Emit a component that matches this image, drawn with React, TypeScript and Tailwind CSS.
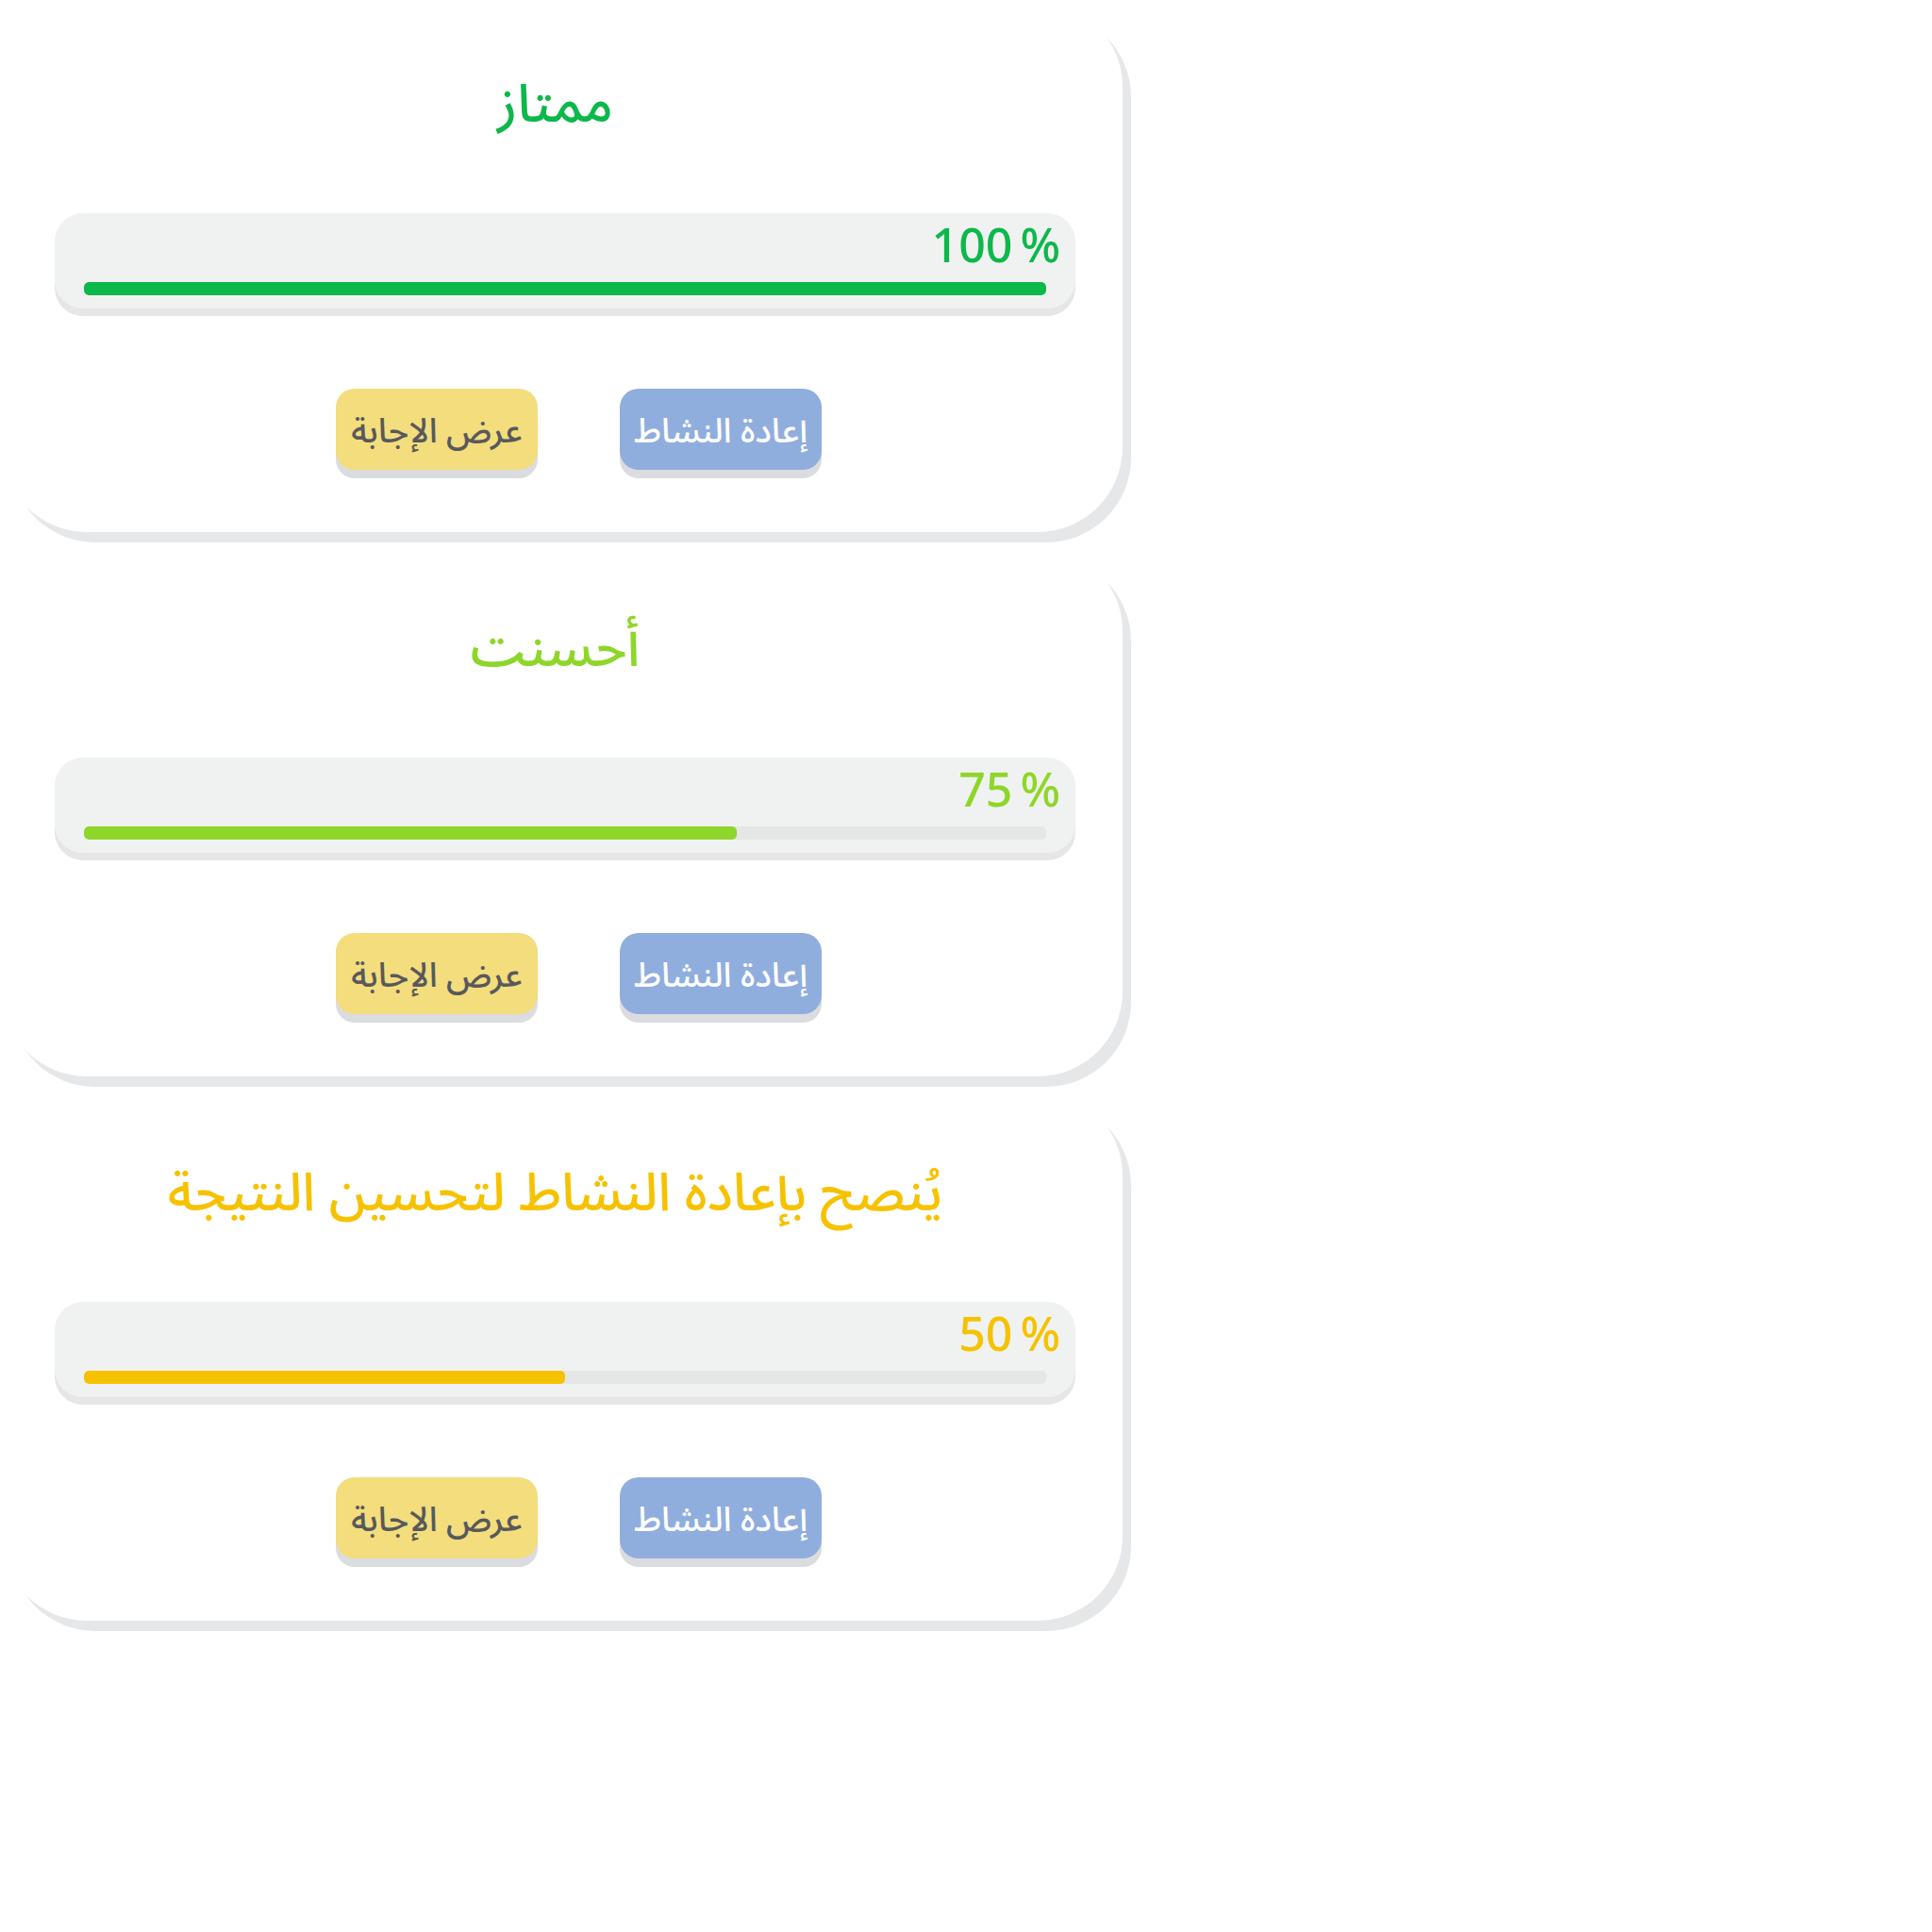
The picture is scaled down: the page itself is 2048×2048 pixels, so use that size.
type Result = {
  title: string;
  score: number;
  fill: number;
  textClass: string;
  barClass: string;
};

const results: Result[] = [
  { title: 'ممتاز', score: 100, fill: 100, textClass: 'text-[#0db84b]', barClass: 'bg-[#0db84b]' },
  { title: 'أحسنت', score: 75, fill: 67.8, textClass: 'text-[#8ed62a]', barClass: 'bg-[#8ed62a]' },
  {
    title: 'يُنصح بإعادة النشاط لتحسين النتيجة',
    score: 50,
    fill: 50,
    textClass: 'text-[#f6c200]',
    barClass: 'bg-[#f6c200]',
  },
];

const buttonClass =
  'h-[86px] w-[214px] rounded-[20px] pt-1.5 text-center text-[36px] leading-[80px] whitespace-nowrap shadow-[0_9px_0_#dbdce0]';

function ScoreBar({ result }: { result: Result }) {
  return (
    <div className="mt-[75px] mr-[50px] ml-14 rounded-[30px] bg-[#f0f2f1] pt-[9px] pb-[14px] shadow-[0_8px_0_#e6e6e6]">
      <div
        className={`flex justify-end gap-2 pr-4 font-['Noto_Sans',sans-serif] text-[50px] leading-[48px] font-medium ${result.textClass}`}
      >
        <span>{result.score}</span>
        <span>%</span>
      </div>
      <div
        role="progressbar"
        aria-label={result.title}
        aria-valuenow={result.score}
        aria-valuemin={0}
        aria-valuemax={100}
        className="mx-[31px] mt-4 h-[14px] overflow-hidden rounded-[5px] bg-[#e6e6e6]"
      >
        <div className={`h-full rounded-[5px] ${result.barClass}`} style={{ width: `${result.fill}%` }} />
      </div>
    </div>
  );
}

function ResultCard({ result }: { result: Result }) {
  return (
    <section className="rounded-[90px] bg-white pt-[69px] pb-[66px] shadow-[9px_11px_0_#e6e7e9]">
      <h2 dir="rtl" className={`pr-[15px] text-center text-[56px] leading-[80px] font-medium ${result.textClass}`}>
        {result.title}
      </h2>
      <ScoreBar result={result} />
      <div dir="rtl" className="mt-[85px] flex justify-center gap-[87px] pl-[35px] font-medium">
        <button type="button" className={`bg-[#90aedd] text-white ${buttonClass}`}>
          إعادة النشاط
        </button>
        <button type="button" className={`bg-[#f3dd7d] text-[#58595b] ${buttonClass}`}>
          عرض الإجابة
        </button>
      </div>
    </section>
  );
}

export default function App() {
  return (
    <main
      lang="ar"
      className="flex min-h-screen flex-col bg-white p-0.5 font-['Noto_Sans_Arabic','Noto_Sans',sans-serif]"
    >
      <div className="flex w-full max-w-[1188px] flex-col gap-[15px]">
        {results.map((result) => (
          <ResultCard key={result.score} result={result} />
        ))}
      </div>
    </main>
  );
}
